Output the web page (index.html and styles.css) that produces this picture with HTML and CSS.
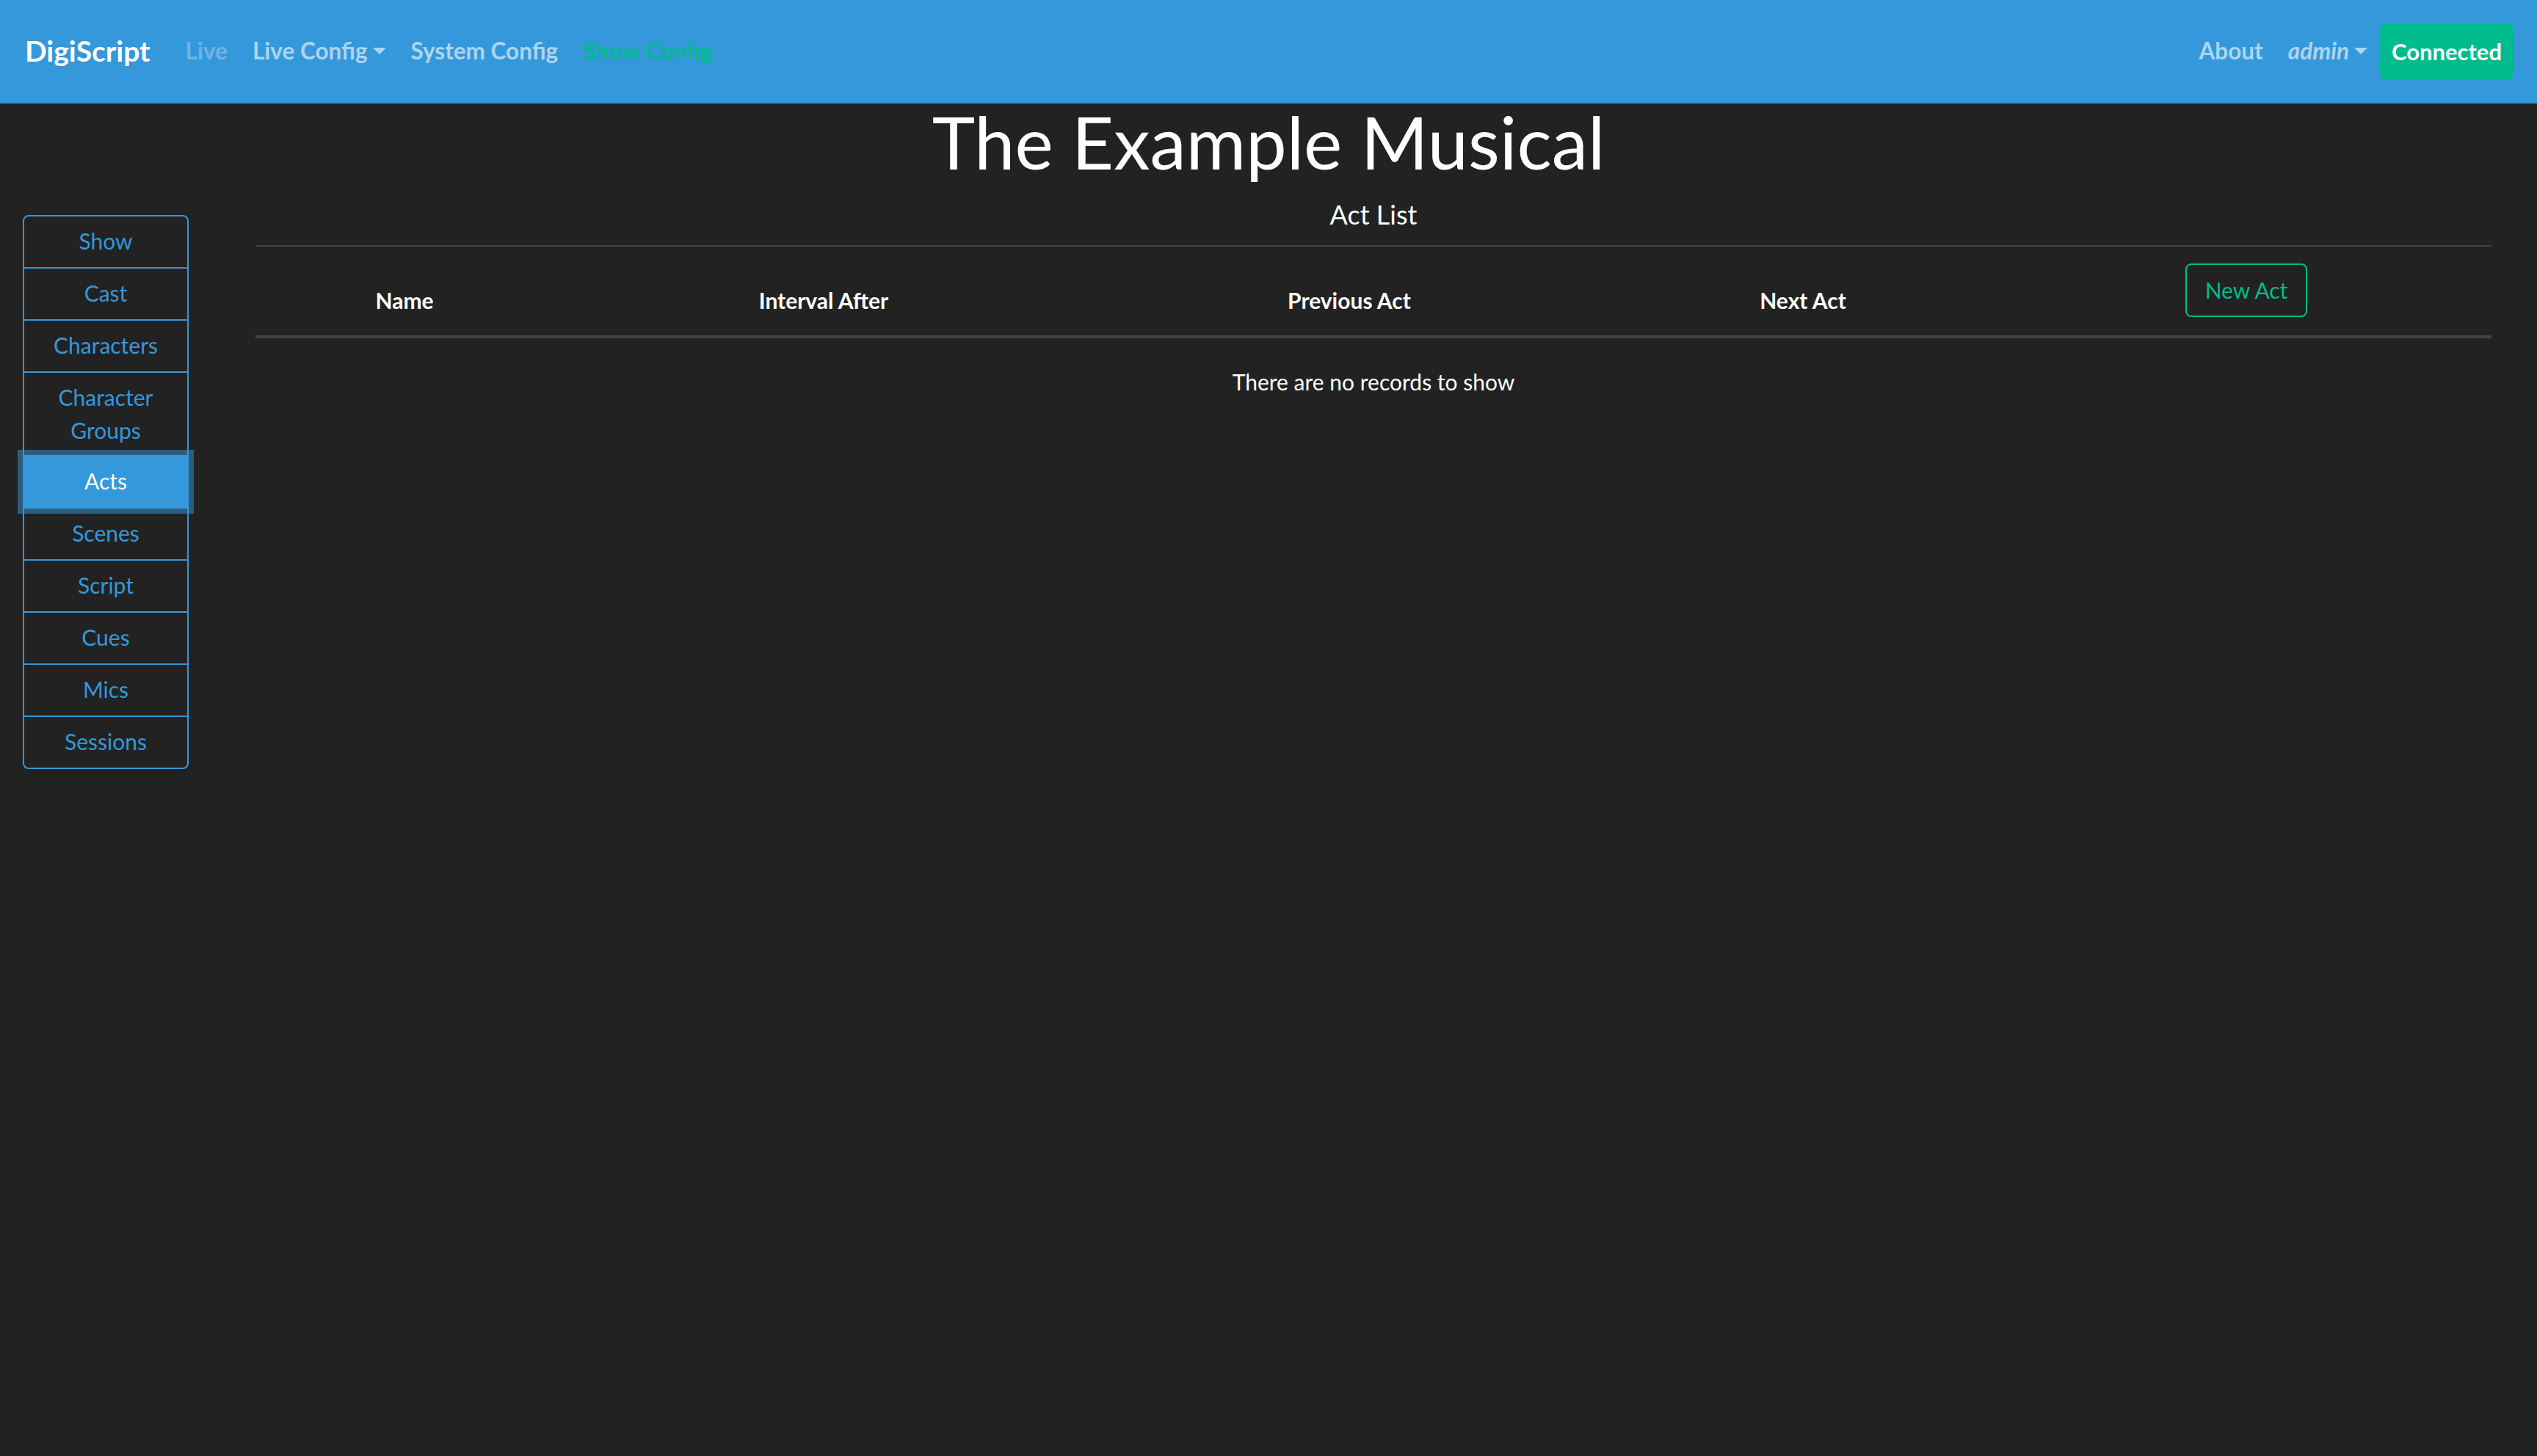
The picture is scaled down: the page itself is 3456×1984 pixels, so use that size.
FILE: index.html
```html
<!DOCTYPE html>
<html lang="en">

<head>
    <meta charset="UTF-8">
    <meta name="viewport" content="width=device-width, initial-scale=1.0">
    <title>DigiScript</title>
    <link rel="stylesheet" href="styles.css">
</head>

<body>
    <nav class="navbar">
        <a class="brand" href="#">DigiScript</a>
        <ul class="nav-links">
            <li><a class="nav-link disabled" href="#">Live</a></li>
            <li><a class="nav-link dropdown" href="#">Live Config</a></li>
            <li><a class="nav-link" href="#">System Config</a></li>
            <li><a class="nav-link active" href="#">Show Config</a></li>
        </ul>
        <ul class="nav-links nav-right">
            <li><a class="nav-link" href="#">About</a></li>
            <li><a class="nav-link dropdown user" href="#">admin</a></li>
            <li><button type="button" class="status-btn">Connected</button></li>
        </ul>
    </nav>

    <h1 class="show-title">The Example Musical</h1>

    <div class="page">
        <div class="side-menu">
            <a class="menu-item" href="#">Show</a>
            <a class="menu-item" href="#">Cast</a>
            <a class="menu-item" href="#">Characters</a>
            <a class="menu-item" href="#">Character<br>Groups</a>
            <a class="menu-item active" href="#">Acts</a>
            <a class="menu-item" href="#">Scenes</a>
            <a class="menu-item" href="#">Script</a>
            <a class="menu-item" href="#">Cues</a>
            <a class="menu-item" href="#">Mics</a>
            <a class="menu-item" href="#">Sessions</a>
        </div>

        <div class="main">
            <h5 class="section-title">Act List</h5>
            <table class="act-table">
                <colgroup>
                    <col style="width: 406px">
                    <col style="width: 736px">
                    <col style="width: 696px">
                    <col style="width: 540px">
                    <col style="width: 668px">
                </colgroup>
                <thead>
                    <tr>
                        <th>Name</th>
                        <th>Interval After</th>
                        <th>Previous Act</th>
                        <th>Next Act</th>
                        <th class="btn-cell"><button type="button" class="new-btn">New Act</button></th>
                    </tr>
                </thead>
                <tbody>
                    <tr>
                        <td colspan="5" class="empty">There are no records to show</td>
                    </tr>
                </tbody>
            </table>
        </div>
    </div>
</body>

</html>
```

FILE: styles.css
```css
body {
    margin: 0;
    background: #222;
    color: #fff;
    font-family: "Lato", "Open Sans", sans-serif;
    font-size: 30px;
}

a {
    text-decoration: none;
}

/* top bar */
.navbar {
    display: flex;
    align-items: center;
    height: 141px;
    padding: 0 32px 0 34px;
    background: #3498db;
    box-sizing: border-box;
}

.brand {
    margin: -3px 31px 0 0;
    color: #fff;
    font-size: 39px;
    font-weight: 700;
}

.nav-links {
    display: flex;
    align-items: center;
    list-style: none;
    margin: 0;
    padding: 0;
}

.nav-right {
    margin-left: auto;
}

.nav-link {
    display: block;
    margin-top: -3px;
    padding: 0 17px;
    color: rgba(255, 255, 255, 0.6);
    font-size: 31.5px;
    font-weight: 700;
}

.nav-link.disabled {
    color: rgba(255, 255, 255, 0.3);
}

.nav-link.active {
    color: #00bc8c;
}

.nav-link.user {
    font-style: italic;
}

.dropdown::after {
    content: "";
    display: inline-block;
    margin-left: 7px;
    vertical-align: 7px;
    border-top: 9px solid;
    border-left: 9px solid transparent;
    border-right: 9px solid transparent;
}

.status-btn {
    height: 77px;
    padding: 0 16px 2px;
    border: none;
    border-radius: 9px;
    background: #00bc8c;
    color: #fff;
    font-family: inherit;
    font-size: 31px;
    font-weight: 700;
}

/* title */
.show-title {
    margin: 0;
    text-align: center;
    font-size: 99px;
    font-weight: 400;
    line-height: 103px;
}

.page {
    display: flex;
    align-items: flex-start;
}

/* left menu */
.side-menu {
    display: flex;
    flex-direction: column;
    width: 226px;
    margin: 49px 0 0 31px;
    border: 2px solid #3498db;
    border-radius: 8px;
    box-sizing: border-box;
}

.menu-item {
    padding: 11px 0 13px;
    color: #3498db;
    text-align: center;
    line-height: 45px;
    border-top: 2px solid #3498db;
}

.menu-item:first-child {
    border-top: none;
}

.menu-item.active {
    position: relative;
    z-index: 1;
    margin: -2px -2px 0;
    border: 2px solid #3498db;
    background: #3498db;
    color: #fff;
    box-shadow: 0 0 0 7px rgba(52, 152, 219, 0.5);
}

.menu-item.active + .menu-item {
    border-top: none;
}

/* main table */
.main {
    flex: 1;
    margin: 0 62px 0 91px;
    padding-top: 27px;
}

.section-title {
    margin: 0 0 20px;
    text-align: center;
    font-size: 36px;
    font-weight: 400;
    line-height: 43px;
}

.act-table {
    width: 3046px;
    border-collapse: collapse;
    table-layout: fixed;
}

.act-table th {
    padding: 23px 24px 25px;
    text-align: center;
    vertical-align: bottom;
    font-weight: 700;
    line-height: 45px;
    border-top: 2px solid #444;
    border-bottom: 4px solid #444;
}

.act-table th.btn-cell {
    vertical-align: top;
    padding-top: 23px;
}

.new-btn {
    height: 73px;
    padding: 0 25px 2px;
    border: 2px solid #00bc8c;
    border-radius: 8px;
    background: transparent;
    color: #00bc8c;
    font-family: inherit;
    font-size: 30px;
}

.act-table td.empty {
    padding: 37px 24px 24px;
    text-align: center;
    line-height: 45px;
}
```
